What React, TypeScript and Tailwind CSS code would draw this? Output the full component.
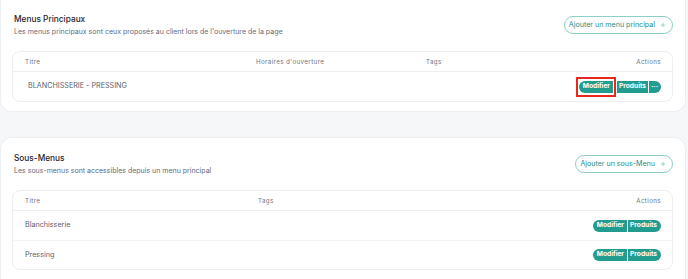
import { Plus } from 'lucide-react'

type Row = { title: string; upper?: boolean; more?: boolean; highlight?: boolean }

function AddButton({ label }: { label: string }) {
  return (
    <button className="flex h-[18px] items-center gap-[5px] rounded-full border border-[#8ccfc6] bg-white pl-[4px] pr-[6px] text-[7.1px] text-[#1e8f83]">
      <span>{label}</span>
      <Plus className="h-[6px] w-[6px] text-[#7cc6bc]" strokeWidth={3} />
    </button>
  )
}

function Actions({ more, highlight }: { more?: boolean; highlight?: boolean }) {
  return (
    <div className="flex items-center">
      <div className={highlight ? 'border-2 border-[#e8281f] px-[1px] py-[2px]' : ''}>
        <button className="flex h-[12px] items-center rounded-l-full bg-[#239c90] pl-[4px] pr-[3px] text-[6.6px] font-bold text-white">
          Modifier
        </button>
      </div>
      <button
        className={
          'flex h-[12px] items-center border-l border-white bg-[#239c90] pl-[2px] text-[6.6px] font-bold text-white ' +
          (more ? 'pr-[2px]' : 'rounded-r-full pr-[4px]')
        }
      >
        Produits
      </button>
      {more && (
        <button className="flex h-[12px] items-center rounded-r-full border-l border-white bg-[#239c90] pl-[2px] pr-[3px] text-[7px] font-bold leading-none text-white">
          ···
        </button>
      )}
    </div>
  )
}

function Section({
  title,
  subtitle,
  button,
  cols,
  rows,
  first,
}: {
  title: string
  subtitle: string
  button: string
  cols: { label: string; className: string }[]
  rows: Row[]
  first?: boolean
}) {
  return (
    <section
      className={
        'mr-[2px] border-[#eceef2] bg-white ' +
        (first ? 'rounded-b-xl border-x border-b pt-[13px] pb-[9px]' : 'rounded-t-xl border-x border-t pt-[14px] pb-[20px]')
      }
    >
      <div className="flex items-center justify-between pl-[13px] pr-[12px]">
        <div>
          <h2 className="text-[8.3px] font-medium leading-[12px] text-[#1f2430]">{title}</h2>
          <p className="mt-[2px] text-[7px] leading-[10px] text-[#5f6b80]">{subtitle}</p>
        </div>
        <AddButton label={button} />
      </div>

      <div className="ml-[11px] mr-[12px] mt-[14px] rounded-lg border border-[#eceef2]">
        <div className="flex h-[20px] items-center border-b border-[#eceef2] pl-[12px] pr-[11px] text-[6.2px] tracking-[0.4px] text-[#6b7385]">
          {cols.map((c) => (
            <div key={c.label} className={c.className}>
              {c.label}
            </div>
          ))}
        </div>
        {rows.map((r, i) => (
          <div
            key={r.title}
            className={
              'flex h-[29px] items-center pr-[11px] ' +
              (i > 0 ? 'border-t border-[#f3f4f6] ' : '') +
              (r.upper ? 'pl-[15px]' : 'pl-[12px]')
            }
          >
            <div className="flex-1 text-[7.2px] text-[#5b6272]">{r.title}</div>
            <Actions more={r.more} highlight={r.highlight} />
          </div>
        ))}
      </div>
    </section>
  )
}

export default function App() {
  return (
    <div className="h-[279px] w-[688px] overflow-hidden bg-[#f6f7f9] font-['Inter',sans-serif]">
      <Section
        first
        title="Menus Principaux"
        subtitle="Les menus principaux sont ceux proposés au client lors de l'ouverture de la page"
        button="Ajouter un menu principal"
        cols={[
          { label: 'Titre', className: 'w-[231px]' },
          { label: "Horaires d'ouverture", className: 'w-[170px]' },
          { label: 'Tags', className: 'flex-1' },
          { label: 'Actions', className: 'text-right' },
        ]}
        rows={[{ title: 'BLANCHISSERIE - PRESSING', upper: true, more: true, highlight: true }]}
      />
      <div className="h-[25px]" />
      <Section
        title="Sous-Menus"
        subtitle="Les sous-menus sont accessibles depuis un menu principal"
        button="Ajouter un sous-Menu"
        cols={[
          { label: 'Titre', className: 'w-[233px]' },
          { label: 'Tags', className: 'flex-1' },
          { label: 'Actions', className: 'text-right' },
        ]}
        rows={[{ title: 'Blanchisserie' }, { title: 'Pressing' }]}
      />
    </div>
  )
}
